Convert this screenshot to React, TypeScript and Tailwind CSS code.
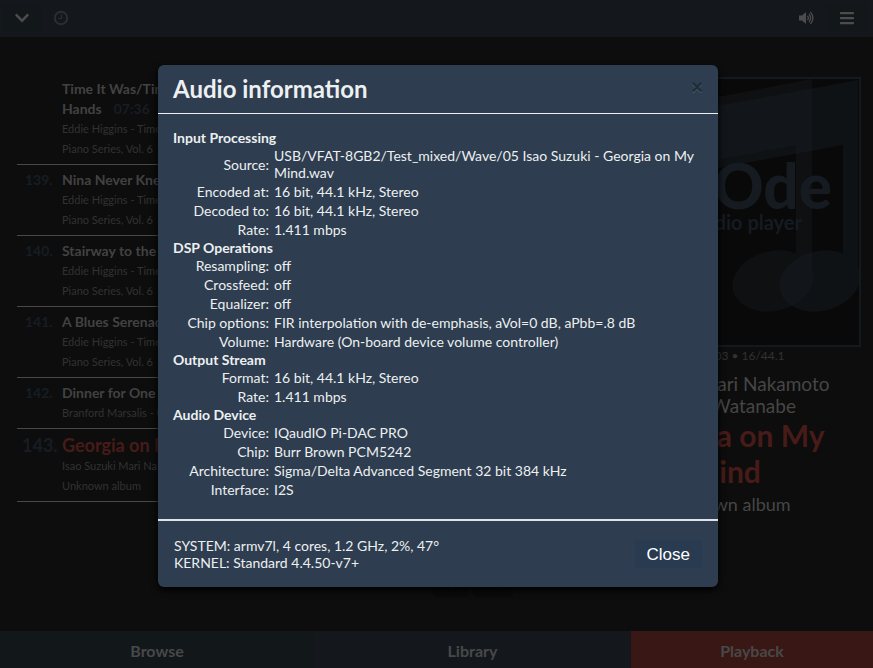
import type { ReactNode } from 'react';
import { FaArrowDown, FaBars, FaChevronDown, FaRandom } from 'react-icons/fa';

type Track = {
  num?: string;
  title: string;
  time?: string;
  lines: string[];
  active?: boolean;
};

const tracks: Track[] = [
  { title: 'Time It Was/Time On My Hands', time: '07:36', lines: ['Eddie Higgins - Time On My', 'Piano Series, Vol. 6'] },
  { num: '139.', title: 'Nina Never Knew', lines: ['Eddie Higgins - Time On My', 'Piano Series, Vol. 6'] },
  { num: '140.', title: 'Stairway to the Stars', lines: ['Eddie Higgins - Time On My', 'Piano Series, Vol. 6'] },
  { num: '141.', title: 'A Blues Serenade', lines: ['Eddie Higgins - Time On My', 'Piano Series, Vol. 6'] },
  { num: '142.', title: 'Dinner for One', lines: ['Branford Marsalis - Unknown'] },
  { num: '143.', title: 'Georgia on My Mind', lines: ['Isao Suzuki Mari Nakamoto', 'Unknown album'], active: true },
];

const sections = [
  {
    name: 'Input Processing',
    rows: [
      ['Source', 'USB/VFAT-8GB2/Test_mixed/Wave/05 Isao Suzuki - Georgia on My Mind.wav'],
      ['Encoded at', '16 bit, 44.1 kHz, Stereo'],
      ['Decoded to', '16 bit, 44.1 kHz, Stereo'],
      ['Rate', '1.411 mbps'],
    ],
  },
  {
    name: 'DSP Operations',
    rows: [
      ['Resampling', 'off'],
      ['Crossfeed', 'off'],
      ['Equalizer', 'off'],
      ['Chip options', 'FIR interpolation with de-emphasis, aVol=0 dB, aPbb=.8 dB'],
      ['Volume', 'Hardware (On-board device volume controller)'],
    ],
  },
  {
    name: 'Output Stream',
    rows: [
      ['Format', '16 bit, 44.1 kHz, Stereo'],
      ['Rate', '1.411 mbps'],
    ],
  },
  {
    name: 'Audio Device',
    rows: [
      ['Device', 'IQaudIO Pi-DAC PRO'],
      ['Chip', 'Burr Brown PCM5242'],
      ['Architecture', 'Sigma/Delta Advanced Segment 32 bit 384 kHz'],
      ['Interface', 'I2S'],
    ],
  },
];

function ClockIcon() {
  return (
    <svg viewBox="0 0 16 16" className="size-4" fill="none" stroke="currentColor">
      <circle cx="8" cy="8" r="6.2" strokeWidth="2" />
      <path d="M8.5 4.2V8.5H5.5" strokeWidth="1.2" />
    </svg>
  );
}

function VolumeIcon() {
  return (
    <svg viewBox="0 0 18 16" className="h-4 w-[18px]" fill="none" stroke="currentColor" strokeWidth="1.3">
      <path d="M1 5.5H4L8 2V14L4 10.5H1Z" fill="currentColor" stroke="none" />
      <path d="M9.5 5.8Q11.3 8 9.5 10.2M11 3.8Q14.2 8 11 12.2M12.4 1.8Q17.4 8 12.4 14.2" />
    </svg>
  );
}

function IconButton({ label, className, children }: { label: string; className?: string; children: ReactNode }) {
  return (
    <button aria-label={label} className={`flex h-7 w-10 items-center justify-center rounded ${className ?? ''}`}>
      {children}
    </button>
  );
}

function TopBar() {
  return (
    <header className="flex h-[37px] items-center justify-between bg-[#14181c] px-0.5 pb-px text-[#4c4c4c]">
      <div className="flex items-center">
        <IconButton label="Collapse" className="bg-[#12171a]">
          <FaChevronDown className="size-4" />
        </IconButton>
        <IconButton label="Clock radio" className="pr-0.5 text-[#2c2f31]">
          <ClockIcon />
        </IconButton>
      </div>
      <div className="flex items-center pr-1">
        <IconButton label="Volume">
          <VolumeIcon />
        </IconButton>
        <IconButton label="Menu" className="bg-[#12171a]">
          <FaBars className="size-4" />
        </IconButton>
      </div>
    </header>
  );
}

function Playlist() {
  return (
    <ol className="pt-[37px] pl-[17px]">
      {tracks.map((track) => (
        <li key={track.title} className="grid grid-cols-[45px_1fr] border-b border-[#484848] py-[5px]">
          <span className={track.active ? 'pl-[5px] text-[18px] leading-[22px] font-bold text-[#161d24]' : 'pl-2 text-[14px] leading-5 font-bold text-[#161d24]'}>
            {track.num}
          </span>
          <div>
            <p className={track.active ? 'text-[18px] leading-[22px] font-bold whitespace-nowrap text-[#471b18]' : 'pr-12 text-[14px] leading-5 font-bold text-[#424242]'}>
              {track.title}
              {track.time && <span className="pl-3 text-[#161d24]">{track.time}</span>}
            </p>
            {track.lines.map((line) => (
              <p key={line} className="text-[11px] leading-5 whitespace-nowrap text-[#323232]">{line}</p>
            ))}
          </div>
        </li>
      ))}
    </ol>
  );
}

function Controls() {
  return (
    <div className="flex items-end justify-center pb-[34px] pl-[60px] text-[#3d3d3d]">
      <div className="flex gap-1">
        <button aria-label="Move down" className="flex h-9 w-9 items-center justify-center rounded bg-[#0a0a0a]">
          <FaArrowDown className="size-5" />
        </button>
        <button aria-label="Random" className="flex h-9 w-10 items-center justify-center rounded bg-[#0a0a0a]">
          <FaRandom className="size-5" />
        </button>
      </div>
    </div>
  );
}

function Cover() {
  return (
    <svg viewBox="0 0 266 266" className="block w-full border-2 border-[#14191d] bg-[#090909]">
      <g fill="#0e1215">
        <path d="M0 50L265 1V200H250V66L0 112Z" />
        <ellipse cx="227" cy="202" rx="41" ry="30" transform="rotate(-14 227 202)" />
      </g>
      <g fill="#1d2228" opacity="0.3">
        <path d="M0 42L219 0V200H203V66L0 104Z" />
        <ellipse cx="180" cy="202" rx="41" ry="30" transform="rotate(-14 180 202)" />
      </g>
      <text x="239" y="130" textAnchor="end" fill="#151b21" className="font-[Lato,sans-serif] text-[62px] font-black">moOde</text>
      <text x="209" y="151" textAnchor="end" fill="#151b21" className="font-[Lato,sans-serif] text-[20px] font-bold">audio player</text>
    </svg>
  );
}

function NowPlaying() {
  return (
    <section className="pt-10 pr-3 text-center text-[#464646]">
      <Cover />
      <p className="text-[12px] leading-[18px] text-[#323232]">WAV 07:03 • 16/44.1</p>
      <p className="pt-2 text-[19px] leading-[22px]">
        Suzuki &amp; Mari Nakamoto
        <br />
        Sadao Watanabe
      </p>
      <h2 className="text-[30px] leading-9 font-bold text-[#471b18]">
        Georgia on My
        <br />
        Mind
      </h2>
      <p className="pt-1 text-[18px] leading-[22px]">Unknown album</p>
    </section>
  );
}

function TabBar() {
  return (
    <nav className="grid h-[37px] grid-cols-[314fr_317fr_242fr] text-base font-bold text-[#484848]">
      <a href="#browse" className="flex items-center justify-center bg-[#12171a] pt-0.5">Browse</a>
      <a href="#library" className="flex items-center justify-center bg-[#14181c] pt-0.5">Library</a>
      <a href="#playback" className="flex items-center justify-center bg-[#391715] pt-0.5">Playback</a>
    </nav>
  );
}

function AudioInfo() {
  return (
    <div
      role="dialog"
      aria-labelledby="audio-info-title"
      className="w-[560px] max-w-full rounded-md bg-[#2e3d4f] text-[14px] text-[#ecf0f1] shadow-[0_3px_7px_#000000]"
    >
      <header className="flex items-start justify-between border-b border-[#ecf0f1] px-[15px]">
        <h1 id="audio-info-title" className="text-2xl leading-[48px] font-bold">Audio information</h1>
        <button aria-label="Dismiss" className="pt-2.5 font-['Liberation_Sans',sans-serif] text-[20px] leading-6 font-bold text-[#1f2c39] text-shadow-[0_1px_0_#4d5a6a]">×</button>
      </header>
      <div className="px-[15px] pt-[15px] pb-5">
        {sections.map((section) => (
          <section key={section.name}>
            <h2 className="leading-[17px] font-bold">{section.name}</h2>
            <table className="w-full">
              <tbody>
                {section.rows.map(([label, value]) => (
                  <tr key={label}>
                    <th scope="row" className="w-24 p-0 text-right leading-[17px] font-normal">{label}:</th>
                    <td className="py-px pl-[5px] leading-[17px]">{value}</td>
                  </tr>
                ))}
              </tbody>
            </table>
          </section>
        ))}
      </div>
      <footer className="flex items-center justify-between border-t-2 border-[#dfe3e6] p-4">
        <p className="leading-[17px]">
          SYSTEM: armv7l, 4 cores, 1.2 GHz, 2%, 47°
          <br />
          KERNEL: Standard 4.4.50-v7+
        </p>
        <button className="h-7 rounded bg-[#293b50] px-3 pt-px font-['Liberation_Sans',sans-serif] text-[17px] text-white">Close</button>
      </footer>
    </div>
  );
}

export default function App() {
  return (
    <div className="relative font-[Lato,sans-serif]">
      <div className="flex min-h-screen flex-col bg-[#0d0d0d]">
        <TopBar />
        <main className="grid flex-1 grid-cols-[1fr_1fr_282px]">
          <Playlist />
          <Controls />
          <NowPlaying />
        </main>
        <TabBar />
      </div>
      <div className="absolute inset-0 flex items-start justify-center pt-[65px] pl-[3px]">
        <AudioInfo />
      </div>
    </div>
  );
}
